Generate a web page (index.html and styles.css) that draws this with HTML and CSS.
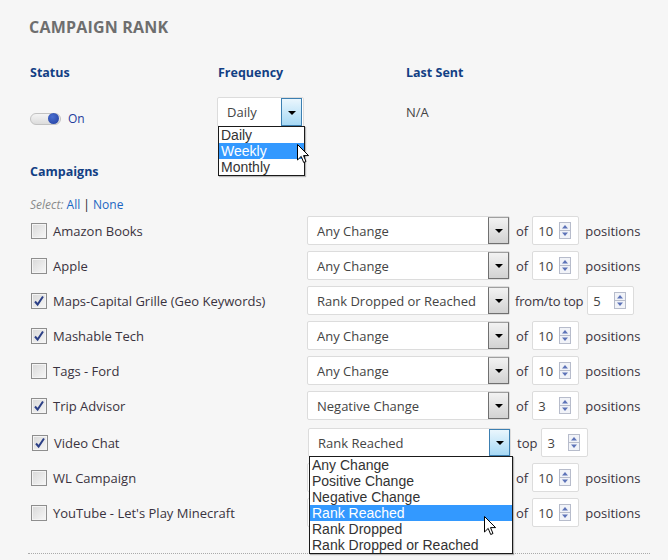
FILE: index.html
```html
<!DOCTYPE html>
<html>
<head>
<meta charset="utf-8">
<link rel="stylesheet" href="styles.css">
</head>
<body>
<div class="page">
  <h1 class="title">CAMPAIGN RANK</h1>

  <div class="settings">
    <div class="hdr">Status</div>
    <div class="hdr">Frequency</div>
    <div class="hdr">Last Sent</div>

    <div class="status-cell">
      <span class="toggle"><span class="knob"></span></span>
      <span class="on">On</span>
    </div>
    <div class="freq-cell">
      <div class="sel sel-freq">
        <span class="sel-text">Daily</span>
        <span class="sel-btn focus"></span>
        <ul class="list list-freq">
          <li>Daily</li>
          <li class="hl">Weekly</li>
          <li>Monthly</li>
        </ul>
        <svg class="cursor cursor-freq" width="13" height="20" viewBox="0 0 13 20"><path d="M0.5 0.5 L0.5 16 L4.2 12.4 L6.7 18.5 L9 17.5 L6.5 11.6 L11.6 11.6 Z" fill="#fff" stroke="#000" stroke-width="1"/></svg>
      </div>
    </div>
    <div class="last-cell">N/A</div>
  </div>

  <div class="hdr camp-hdr">Campaigns</div>
  <div class="select-line"><em>Select:</em> <a>All</a> <span class="bar">|</span> <a>None</a></div>

  <div class="rows">
    <div class="row">
      <label class="camp"><span class="cb"></span>Amazon Books</label>
      <div class="sel"><span class="sel-text">Any Change</span><span class="sel-btn"></span></div>
      <span class="txt">of</span>
      <div class="spin"><span>10</span><svg width="12" height="17" viewBox="0 0 12 17"><rect x="0.5" y="0.5" width="11" height="16" fill="#f1f3f8" stroke="#b7bccb"/><line x1="1" y1="8.5" x2="11" y2="8.5" stroke="#b7bccb"/><path d="M3 6.5 L6 3 L9 6.5 Z" fill="#5d73b8"/><path d="M3 10.5 L9 10.5 L6 14 Z" fill="#5d73b8"/></svg></div>
      <span class="txt">positions</span>
    </div>
    <div class="row">
      <label class="camp"><span class="cb"></span>Apple</label>
      <div class="sel"><span class="sel-text">Any Change</span><span class="sel-btn"></span></div>
      <span class="txt">of</span>
      <div class="spin"><span>10</span><svg width="12" height="17" viewBox="0 0 12 17"><rect x="0.5" y="0.5" width="11" height="16" fill="#f1f3f8" stroke="#b7bccb"/><line x1="1" y1="8.5" x2="11" y2="8.5" stroke="#b7bccb"/><path d="M3 6.5 L6 3 L9 6.5 Z" fill="#5d73b8"/><path d="M3 10.5 L9 10.5 L6 14 Z" fill="#5d73b8"/></svg></div>
      <span class="txt">positions</span>
    </div>
    <div class="row">
      <label class="camp"><span class="cb checked"><svg width="12" height="12" viewBox="0 0 12 12"><path d="M2 6.5 L4.6 9.5 L10 1.5" fill="none" stroke="#2b3f86" stroke-width="2"/></svg></span>Maps-Capital Grille (Geo Keywords)</label>
      <div class="sel"><span class="sel-text">Rank Dropped or Reached</span><span class="sel-btn"></span></div>
      <span class="txt txt-narrow">from/to top</span>
      <div class="spin"><span>5</span><svg width="12" height="17" viewBox="0 0 12 17"><rect x="0.5" y="0.5" width="11" height="16" fill="#f1f3f8" stroke="#b7bccb"/><line x1="1" y1="8.5" x2="11" y2="8.5" stroke="#b7bccb"/><path d="M3 6.5 L6 3 L9 6.5 Z" fill="#5d73b8"/><path d="M3 10.5 L9 10.5 L6 14 Z" fill="#5d73b8"/></svg></div>
    </div>
    <div class="row">
      <label class="camp"><span class="cb checked"><svg width="12" height="12" viewBox="0 0 12 12"><path d="M2 6.5 L4.6 9.5 L10 1.5" fill="none" stroke="#2b3f86" stroke-width="2"/></svg></span>Mashable Tech</label>
      <div class="sel"><span class="sel-text">Any Change</span><span class="sel-btn"></span></div>
      <span class="txt">of</span>
      <div class="spin"><span>10</span><svg width="12" height="17" viewBox="0 0 12 17"><rect x="0.5" y="0.5" width="11" height="16" fill="#f1f3f8" stroke="#b7bccb"/><line x1="1" y1="8.5" x2="11" y2="8.5" stroke="#b7bccb"/><path d="M3 6.5 L6 3 L9 6.5 Z" fill="#5d73b8"/><path d="M3 10.5 L9 10.5 L6 14 Z" fill="#5d73b8"/></svg></div>
      <span class="txt">positions</span>
    </div>
    <div class="row">
      <label class="camp"><span class="cb"></span>Tags - Ford</label>
      <div class="sel"><span class="sel-text">Any Change</span><span class="sel-btn"></span></div>
      <span class="txt">of</span>
      <div class="spin"><span>10</span><svg width="12" height="17" viewBox="0 0 12 17"><rect x="0.5" y="0.5" width="11" height="16" fill="#f1f3f8" stroke="#b7bccb"/><line x1="1" y1="8.5" x2="11" y2="8.5" stroke="#b7bccb"/><path d="M3 6.5 L6 3 L9 6.5 Z" fill="#5d73b8"/><path d="M3 10.5 L9 10.5 L6 14 Z" fill="#5d73b8"/></svg></div>
      <span class="txt">positions</span>
    </div>
    <div class="row">
      <label class="camp"><span class="cb checked"><svg width="12" height="12" viewBox="0 0 12 12"><path d="M2 6.5 L4.6 9.5 L10 1.5" fill="none" stroke="#2b3f86" stroke-width="2"/></svg></span>Trip Advisor</label>
      <div class="sel"><span class="sel-text">Negative Change</span><span class="sel-btn"></span></div>
      <span class="txt">of</span>
      <div class="spin"><span>3</span><svg width="12" height="17" viewBox="0 0 12 17"><rect x="0.5" y="0.5" width="11" height="16" fill="#f1f3f8" stroke="#b7bccb"/><line x1="1" y1="8.5" x2="11" y2="8.5" stroke="#b7bccb"/><path d="M3 6.5 L6 3 L9 6.5 Z" fill="#5d73b8"/><path d="M3 10.5 L9 10.5 L6 14 Z" fill="#5d73b8"/></svg></div>
      <span class="txt">positions</span>
    </div>
    <div class="row row-open">
      <label class="camp"><span class="cb checked"><svg width="12" height="12" viewBox="0 0 12 12"><path d="M2 6.5 L4.6 9.5 L10 1.5" fill="none" stroke="#2b3f86" stroke-width="2"/></svg></span>Video Chat</label>
      <div class="sel">
        <span class="sel-text">Rank Reached</span><span class="sel-btn focus"></span>
        <ul class="list list-camp">
          <li>Any Change</li>
          <li>Positive Change</li>
          <li>Negative Change</li>
          <li class="hl">Rank Reached</li>
          <li>Rank Dropped</li>
          <li>Rank Dropped or Reached</li>
        </ul>
        <svg class="cursor cursor-camp" width="13" height="20" viewBox="0 0 13 20"><path d="M0.5 0.5 L0.5 16 L4.2 12.4 L6.7 18.5 L9 17.5 L6.5 11.6 L11.6 11.6 Z" fill="#fff" stroke="#000" stroke-width="1"/></svg>
      </div>
      <span class="txt">top</span>
      <div class="spin"><span>3</span><svg width="12" height="17" viewBox="0 0 12 17"><rect x="0.5" y="0.5" width="11" height="16" fill="#f1f3f8" stroke="#b7bccb"/><line x1="1" y1="8.5" x2="11" y2="8.5" stroke="#b7bccb"/><path d="M3 6.5 L6 3 L9 6.5 Z" fill="#5d73b8"/><path d="M3 10.5 L9 10.5 L6 14 Z" fill="#5d73b8"/></svg></div>
    </div>
    <div class="row">
      <label class="camp"><span class="cb"></span>WL Campaign</label>
      <div class="sel"><span class="sel-text">Any Change</span><span class="sel-btn"></span></div>
      <span class="txt">of</span>
      <div class="spin"><span>10</span><svg width="12" height="17" viewBox="0 0 12 17"><rect x="0.5" y="0.5" width="11" height="16" fill="#f1f3f8" stroke="#b7bccb"/><line x1="1" y1="8.5" x2="11" y2="8.5" stroke="#b7bccb"/><path d="M3 6.5 L6 3 L9 6.5 Z" fill="#5d73b8"/><path d="M3 10.5 L9 10.5 L6 14 Z" fill="#5d73b8"/></svg></div>
      <span class="txt">positions</span>
    </div>
    <div class="row">
      <label class="camp"><span class="cb"></span>YouTube - Let's Play Minecraft</label>
      <div class="sel"><span class="sel-text">Any Change</span><span class="sel-btn"></span></div>
      <span class="txt">of</span>
      <div class="spin"><span>10</span><svg width="12" height="17" viewBox="0 0 12 17"><rect x="0.5" y="0.5" width="11" height="16" fill="#f1f3f8" stroke="#b7bccb"/><line x1="1" y1="8.5" x2="11" y2="8.5" stroke="#b7bccb"/><path d="M3 6.5 L6 3 L9 6.5 Z" fill="#5d73b8"/><path d="M3 10.5 L9 10.5 L6 14 Z" fill="#5d73b8"/></svg></div>
      <span class="txt">positions</span>
    </div>
  </div>

  <div class="divider"></div>
</div>
</body>
</html>
```

FILE: styles.css
```css
html, body {
  margin: 0;
  padding: 0;
}
body {
  background: #f6f6f6;
  font-family: "Open Sans", "Noto Sans", sans-serif;
  color: #333;
  width: 668px;
  height: 560px;
  overflow: hidden;
}
.page {
  padding: 17px 18px 0 30px;
}
.title {
  margin: 0 0 0 -1px;
  font-size: 16px;
  line-height: 21px;
  font-weight: 700;
  color: #6e6e6e;
  letter-spacing: 0.2px;
}
.settings {
  display: grid;
  grid-template-columns: 188px 188px 1fr;
  margin-top: 25px;
}
.hdr {
  font-size: 12.5px;
  font-weight: 700;
  line-height: 20px;
  color: #123f84;
}
.status-cell {
  display: flex;
  align-items: center;
  gap: 7px;
  margin-top: 14px;
  padding-top: 14px;
  height: 16px;
}
.toggle {
  position: relative;
  width: 29px;
  height: 10px;
  border: 1px solid #c2c2c2;
  border-radius: 6px;
  background: linear-gradient(#f4f4f4, #dcdcdc);
}
.knob {
  position: absolute;
  right: 1px;
  top: -1px;
  width: 11px;
  height: 11px;
  border-radius: 50%;
  background: radial-gradient(circle at 40% 35%, #4a6fd0, #1f3c9e);
}
.on {
  font-size: 12px;
  color: #1e3d9c;
  line-height: 16px;
}
.freq-cell {
  margin-top: 14px;
  margin-left: -1px;
}
.last-cell {
  margin-top: 14px;
  padding-top: 6px;
  font-size: 13px;
  line-height: 18px;
  color: #444;
}
.sel {
  position: relative;
  display: flex;
  align-items: center;
  width: 203px;
  height: 29px;
  box-sizing: border-box;
  border: 1px solid #dcdcdc;
  border-radius: 2px;
  background: #fff;
}
.sel-freq {
  width: 87px;
  height: 30px;
}
.sel-text {
  flex: 1;
  padding-left: 9px;
  font-size: 13px;
  color: #444;
  white-space: nowrap;
}
.sel-btn {
  display: flex;
  align-items: center;
  justify-content: center;
  width: 21px;
  height: 27px;
  box-sizing: border-box;
  border: 1px solid #707070;
  border-top-color: #a0a0a0;
  background: linear-gradient(#f2f2f2, #d2d2d2);
}
.sel-freq .sel-btn {
  height: 28px;
  margin-right: 1px;
}
.sel-btn::before {
  content: "";
  border-left: 4px solid transparent;
  border-right: 4px solid transparent;
  border-top: 4px solid #000;
  margin-top: 1px;
}
.sel-btn.focus {
  border: 1px solid #3c7fb1;
  background: linear-gradient(#eaf6fd, #a7d9f5);
}
.list {
  position: absolute;
  left: 0;
  top: 100%;
  margin: 0;
  padding: 0;
  list-style: none;
  background: #fff;
  border: 1px solid #1a1a1a;
  box-shadow: 1px 1px 1px rgba(0,0,0,0.25);
  font-family: "Liberation Sans", Arial, sans-serif;
  font-size: 14px;
  color: #333;
  z-index: 5;
}
.list li {
  height: 16px;
  line-height: 17px;
  padding-left: 2px;
  white-space: nowrap;
}
.list li.hl {
  background: #3399ff;
  color: #fff;
}
.list-freq {
  left: 0;
  width: 85px;
}
.list-camp {
  left: 0;
  width: 202px;
}
.cursor {
  position: absolute;
  z-index: 6;
}
.cursor-freq {
  left: 79px;
  top: 46px;
}
.cursor-camp {
  left: 175px;
  top: 87px;
}
.camp-hdr {
  margin-top: 35px;
}
.select-line {
  margin-top: 15px;
  font-size: 12px;
  line-height: 16px;
  color: #1a1a1a;
}
.select-line em {
  color: #8a8a8a;
}
.select-line a {
  color: #1a66c2;
}
.rows {
  display: flex;
  flex-direction: column;
}
.row {
  display: flex;
  align-items: center;
  height: 35px;
}
.row-open {
  margin-top: 2px;
  padding-left: 1px;
}
.camp {
  display: flex;
  align-items: center;
  gap: 6px;
  width: 277px;
  font-size: 13px;
  color: #3a3340;
  white-space: nowrap;
}
.cb {
  display: flex;
  align-items: center;
  justify-content: center;
  width: 16px;
  height: 16px;
  box-sizing: border-box;
  border: 1px solid #8e8e8e;
  box-shadow: inset 0 0 0 1px #f4f4f4;
  background: linear-gradient(135deg, #d8d8d8, #f7f7f7);
  margin-left: 1px;
}
.txt {
  font-size: 13px;
  color: #3a3340;
  margin: 0 4px 0 6px;
  white-space: nowrap;
}
.txt-narrow {
  margin-left: 5px;
  letter-spacing: -0.2px;
}
.spin {
  display: flex;
  align-items: center;
  justify-content: space-between;
  width: 47px;
  height: 29px;
  box-sizing: border-box;
  border: 1px solid #dcdcdc;
  border-radius: 2px;
  background: #fff;
  padding: 0 7px 0 5px;
  font-size: 13px;
  color: #444;
}
.divider {
  margin-top: 23px;
  margin-left: -2px;
  width: 622px;
  border-top: 1px dotted #aaa;
}
```
